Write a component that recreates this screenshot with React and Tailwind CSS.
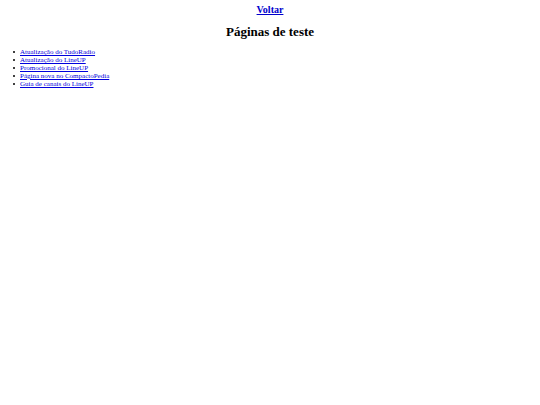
const pages = [
  { name: "Atualização do TudoRadio", href: "#tudoradio" },
  { name: "Atualização do LineUP", href: "#lineup" },
  { name: "Promocional do LineUP", href: "#promocional" },
  { name: "Página nova no CompactoPedia", href: "#compactopedia" },
  { name: "Guia de canais do LineUP", href: "#guia" },
];

export default function App() {
  return (
    <main className="px-1 pt-1 font-['Liberation_Serif',serif] text-black">
      <h2 className="text-center text-[10px] leading-3 font-bold">
        <a href="#voltar" className="text-[#0000cc] underline">
          Voltar
        </a>
      </h2>
      <h1 className="mt-2 text-center text-[13px] leading-4 font-bold">
        Páginas de teste
      </h1>
      <ul className="mt-2 pl-[9px] text-[7px] leading-[8px]">
        {pages.map((page) => (
          <li
            key={page.href}
            className="flex items-center gap-[5px] before:size-[2px] before:rounded-full before:bg-black"
          >
            <a href={page.href} className="text-[#0000dd] underline">
              {page.name}
            </a>
          </li>
        ))}
      </ul>
    </main>
  );
}
